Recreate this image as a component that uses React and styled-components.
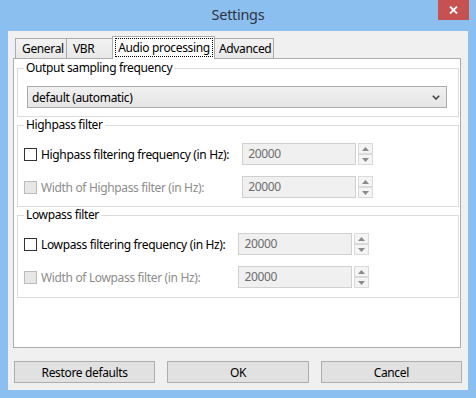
import React from "react"
import styled, { createGlobalStyle, css } from "styled-components"

const GlobalStyle = createGlobalStyle`
    body {
        margin: 0;
        font-family: "Noto Sans", "Open Sans", sans-serif;
        font-size: 12px;
        letter-spacing: -0.35px;
        color: #000;
    }
`

const Frame = styled.div`
    width: 476px;
    height: 398px;
    box-sizing: border-box;
    padding: 0 8px 8px;
    background: #8bbfef;
    display: flex;
    flex-direction: column;
`
const TitleBar = styled.div`
    height: 31px;
    margin: 0 -8px;
    display: grid;
    grid-template-columns: 1fr auto 1fr;
    align-items: start;
`
const Title = styled.div`
    grid-column: 2;
    padding-top: 4px;
    font-size: 14.5px;
    letter-spacing: -0.3px;
    line-height: 21px;
    color: #2f3440;
`
const CloseButton = styled.div`
    justify-self: end;
    margin-right: 7px;
    width: 31px;
    height: 20px;
    background: #c75050;
    display: flex;
    align-items: center;
    justify-content: center;
`
const Client = styled.div`
    flex: 1;
    background: #f0f0f0;
    padding: 5px 7px 7px 5px;
    display: flex;
    flex-direction: column;
`
const TabRow = styled.div`
    height: 22px;
    display: flex;
    align-items: flex-end;
    padding-left: 2px;
    position: relative;
    z-index: 1;
`
const Tab = styled.div`
    box-sizing: border-box;
    width: ${p => p.w}px;
    height: 20px;
    border: 1px solid #acacac;
    border-bottom: none;
    background: linear-gradient(#f2f2f2, #e8e8e8);
    padding-left: 6px;
    line-height: 19px;
    white-space: nowrap;
    margin-left: -1px;
    &:first-child { margin-left: 0; }
    ${p => p.active && css`
        height: 23px;
        margin: 0 -2px -1px;
        padding: 1px 1px 2px 2px;
        background: #fff;
        position: relative;
        z-index: 2;
        line-height: normal;
    `}
`
const FocusRing = styled.div`
    height: 100%;
    box-sizing: border-box;
    border: 1px dotted #000;
    display: flex;
    align-items: center;
    justify-content: center;
    padding-bottom: 1px;
`
const Panel = styled.div`
    height: 290px;
    box-sizing: border-box;
    background: #fff;
    border: 1px solid #adadad;
    padding: 1px 1px 0 3px;
    display: flex;
    flex-direction: column;
`
const Group = styled.fieldset`
    margin: 0;
    min-width: 0;
    border: 1px solid #dcdcdc;
    padding: 10px 8px ${p => p.pb || 8}px 6px;
`
const Legend = styled.legend`
    padding: 0 2px;
    line-height: 16px;
`
const Select = styled.div`
    height: 22px;
    box-sizing: border-box;
    margin: 0 3px;
    border: 1px solid #acacac;
    background: linear-gradient(#f0f0f0, #e5e5e5);
    display: flex;
    align-items: center;
    justify-content: space-between;
    padding: 0 6px 0 4px;
`
const Rows = styled.div`
    display: grid;
    grid-template-columns: auto auto 1fr;
    column-gap: 13px;
    row-gap: 11px;
    align-items: center;
`
const CheckLabel = styled.label`
    display: flex;
    align-items: center;
    gap: 4px;
    white-space: nowrap;
    color: ${p => p.disabled ? "#8d8d8d" : "#000"};
`
const Box = styled.span`
    width: 13px;
    height: 13px;
    flex: none;
    box-sizing: border-box;
    border: 1px solid ${p => p.disabled ? "#bcbcbc" : "#333"};
    background: ${p => p.disabled ? "#e6e6e6" : "#fff"};
`
const Spin = styled.div`
    display: flex;
    gap: 2px;
`
const SpinInput = styled.div`
    width: 114px;
    height: 22px;
    box-sizing: border-box;
    border: 1px solid #d0d0d0;
    background: #f0f0f0;
    color: #6d6d6d;
    padding-left: 5px;
    line-height: 20px;
`
const SpinButtons = styled.div`
    display: flex;
    flex-direction: column;
`
const SpinButton = styled.div`
    width: 15px;
    height: 11px;
    box-sizing: border-box;
    border: 1px solid #dadada;
    background: #f4f4f4;
    display: flex;
    align-items: center;
    justify-content: center;
`
const Buttons = styled.div`
    margin: 13px -1px 0 1px;
    display: flex;
    gap: 12px;
`
const Button = styled.div`
    flex: 1;
    height: 22px;
    box-sizing: border-box;
    border: 1px solid #adadad;
    background: #e1e1e1;
    display: flex;
    align-items: center;
    justify-content: center;
`

const Arrow = ({ up }) => (
    <svg width="7" height="4" viewBox="0 0 7 4">
        <path d={up ? "M0 4 L3.5 0 L7 4 Z" : "M0 0 L3.5 4 L7 0 Z"} fill="#8a8a8a" />
    </svg>
)

const SpinBox = ({ value }) => (
    <Spin>
        <SpinInput>{value}</SpinInput>
        <SpinButtons>
            <SpinButton><Arrow up /></SpinButton>
            <SpinButton><Arrow /></SpinButton>
        </SpinButtons>
    </Spin>
)

const FilterGroup = ({ name, pb }) => (
    <Group pb={pb}>
        <Legend>{name} filter</Legend>
        <Rows>
            <CheckLabel><Box />{name} filtering frequency (in Hz):</CheckLabel>
            <SpinBox value="20000" />
            <span />
            <CheckLabel disabled><Box disabled />Width of {name} filter (in Hz):</CheckLabel>
            <SpinBox value="20000" />
            <span />
        </Rows>
    </Group>
)

export default function App() {
    return (
        <>
            <GlobalStyle />
            <Frame>
                <TitleBar>
                    <Title>Settings</Title>
                    <CloseButton>
                        <svg width="9" height="8" viewBox="0 0 9 8">
                            <path d="M1 0.5 L8 7.5 M8 0.5 L1 7.5" stroke="#fff" strokeWidth="1.8" />
                        </svg>
                    </CloseButton>
                </TitleBar>
                <Client>
                    <TabRow>
                        <Tab w={52}>General</Tab>
                        <Tab w={48}>VBR</Tab>
                        <Tab w={103} active><FocusRing>Audio processing</FocusRing></Tab>
                        <Tab w={62}>Advanced</Tab>
                    </TabRow>
                    <Panel>
                        <Group>
                            <Legend>Output sampling frequency</Legend>
                            <Select>
                                <span>default (automatic)</span>
                                <svg width="8" height="5" viewBox="0 0 8 5">
                                    <path d="M0.8 0.8 L4 4 L7.2 0.8" stroke="#444" strokeWidth="1.6" fill="none" />
                                </svg>
                            </Select>
                        </Group>
                        <FilterGroup name="Highpass" />
                        <FilterGroup name="Lowpass" pb={9} />
                    </Panel>
                    <Buttons>
                        <Button>Restore defaults</Button>
                        <Button>OK</Button>
                        <Button>Cancel</Button>
                    </Buttons>
                </Client>
            </Frame>
        </>
    )
}
